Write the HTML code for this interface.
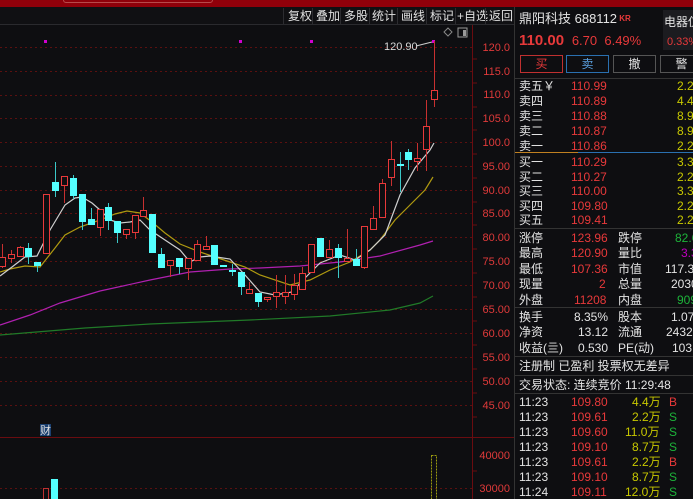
<!DOCTYPE html>
<html><head><meta charset="utf-8"><style>
*{margin:0;padding:0;box-sizing:border-box}
body{width:693px;height:499px;overflow:hidden;background:#0e0e11;font-family:"Liberation Sans","Noto Sans CJK SC",sans-serif;color:#d8d8d8;position:relative}
.abs{position:absolute;white-space:nowrap}
#top{left:0;top:0;width:693px;height:7px;background:#90000a}
#tb{left:0;top:7px;width:514px;height:18px;background:#101013;border-bottom:1px solid #2a2a2e}
#tb span{position:absolute;top:1px;font-size:12px;color:#e0e0e0;line-height:16px}
#tb i{position:absolute;top:1px;width:1px;height:16px;background:#2c2c30}
#rp{left:514px;top:7px;width:179px;height:492px;background:#0e0e11;border-left:1px solid #333}
.r{position:absolute;font-size:12px;line-height:14px;white-space:nowrap}
.red{color:#e8393a}.yel{color:#c8c800}.grn{color:#1db33a}.wht{color:#e4e4e4}.mag{color:#c000c0}
.sep{position:absolute;left:0;width:179px;height:1px;background:#333}
.btn{position:absolute;top:48px;height:18px;width:43px;border:1px solid #555;text-align:center;font-size:12px;line-height:16px}
</style></head><body>
<div id="top" class="abs"><div class="abs" style="left:63px;top:-3px;width:150px;height:6px;border:1px solid #b84a4a;border-radius:4px"></div></div>
<div id="tb" class="abs">
<i style="left:283px"></i><span style="left:288px">复权</span>
<i style="left:312px"></i><span style="left:316px">叠加</span>
<i style="left:340px"></i><span style="left:344px">多股</span>
<i style="left:369px"></i><span style="left:372px">统计</span>
<i style="left:397px"></i><span style="left:401px">画线</span>
<i style="left:426px"></i><span style="left:430px">标记</span>
<i style="left:455px"></i><span style="left:457px">+自选</span>
<i style="left:485px"></i><span style="left:489px">返回</span>
</div>
<svg class="abs" style="left:0;top:25px" width="514" height="474" viewBox="0 25 514 474">
<g stroke="#5a1010" stroke-dasharray="2,3" stroke-width="1">
<line x1="0" x2="472" y1="47.5" y2="47.5"/><line x1="0" x2="472" y1="71.5" y2="71.5"/><line x1="0" x2="472" y1="95.5" y2="95.5"/><line x1="0" x2="472" y1="118.5" y2="118.5"/><line x1="0" x2="472" y1="142.5" y2="142.5"/><line x1="0" x2="472" y1="166.5" y2="166.5"/><line x1="0" x2="472" y1="190.5" y2="190.5"/><line x1="0" x2="472" y1="213.5" y2="213.5"/><line x1="0" x2="472" y1="237.5" y2="237.5"/><line x1="0" x2="472" y1="261.5" y2="261.5"/><line x1="0" x2="472" y1="285.5" y2="285.5"/><line x1="0" x2="472" y1="309.5" y2="309.5"/><line x1="0" x2="472" y1="333.5" y2="333.5"/><line x1="0" x2="472" y1="357.5" y2="357.5"/><line x1="0" x2="472" y1="381.5" y2="381.5"/><line x1="0" x2="472" y1="405.5" y2="405.5"/><line x1="0" x2="472" y1="488.5" y2="488.5"/>
</g>
<line x1="0" x2="514" y1="437.5" y2="437.5" stroke="#6a0c10"/>
<line x1="472.5" x2="472.5" y1="25" y2="499" stroke="#6a0c10"/>
<g stroke="#6a0c10"><line x1="472" x2="477" y1="59" y2="59"/><line x1="472" x2="477" y1="83" y2="83"/><line x1="472" x2="477" y1="107" y2="107"/><line x1="472" x2="477" y1="130" y2="130"/><line x1="472" x2="477" y1="154" y2="154"/><line x1="472" x2="477" y1="178" y2="178"/><line x1="472" x2="477" y1="202" y2="202"/><line x1="472" x2="477" y1="225" y2="225"/><line x1="472" x2="477" y1="249" y2="249"/><line x1="472" x2="477" y1="273" y2="273"/><line x1="472" x2="477" y1="297" y2="297"/><line x1="472" x2="477" y1="321" y2="321"/><line x1="472" x2="477" y1="345" y2="345"/><line x1="472" x2="477" y1="369" y2="369"/><line x1="472" x2="477" y1="393" y2="393"/><line x1="472" x2="477" y1="417" y2="417"/><line x1="472" x2="477" y1="471" y2="471"/></g>
<g fill="#e03a3a" font-size="11" text-anchor="end" font-family="Liberation Sans,sans-serif">
<text x="510" y="51">120.0</text><text x="510" y="75">115.0</text><text x="510" y="98">110.0</text><text x="510" y="122">105.0</text><text x="510" y="146">100.0</text><text x="510" y="170">95.00</text><text x="510" y="194">90.00</text><text x="510" y="217">85.00</text><text x="510" y="241">80.00</text><text x="510" y="265">75.00</text><text x="510" y="289">70.00</text><text x="510" y="313">65.00</text><text x="510" y="337">60.00</text><text x="510" y="361">55.00</text><text x="510" y="385">50.00</text><text x="510" y="409">45.00</text><text x="510" y="459">40000</text><text x="510" y="492">30000</text>
</g>
<g fill="#d000d0"><rect x="44" y="40" width="3" height="3"/><rect x="239" y="40" width="3" height="3"/><rect x="310" y="40" width="3" height="3"/><rect x="432" y="40" width="3" height="3"/></g>
<text x="384" y="50" fill="#d8d8d8" font-size="11">120.90</text>
<line x1="416" y1="46" x2="432" y2="42" stroke="#ccc"/>
<path d="M448 28 l4 4 -4 4 -4 -4z" fill="none" stroke="#888"/>
<rect x="458" y="28" width="9" height="9" fill="none" stroke="#999"/><rect x="463" y="30" width="3" height="6" fill="#999"/>
<polyline fill="none" stroke="#207a28" stroke-width="1.2" points="0,335 85,328 150,324 250,320 330,316 390,310 420,303 433,296"/>
<polyline fill="none" stroke="#b020b0" stroke-width="1.2" points="0,325 30,315 60,303 100,291 150,280 190,272 230,269 260,268 300,266 340,262 380,256 420,245 433,241"/>
<polyline fill="none" stroke="#b09a10" stroke-width="1.2" points="0,272 10,269 25,266 40,267 55,248 65,235 80,227 100,220 115,214 127,211 140,213 152,222 165,233 180,244 200,252 215,257 230,262 245,267 260,275 290,285 310,280 330,270 350,262 370,250 380,240 395,220 410,205 425,190 433,177"/>
<polyline fill="none" stroke="#cfcfcf" stroke-width="1.2" points="0,276 12,267 25,257 37,256 50,230 65,205 75,198 82,197 92,203 100,210 110,220 120,223 130,222 140,220 150,230 165,240 180,250 190,262 200,257 210,256 230,259 245,275 260,292 275,295 292,292 305,278 320,263 340,255 355,260 370,250 385,235 400,195 415,168 430,150 434,143"/>
<g id="c"></g>
<rect x="43.5" y="488.5" width="5" height="11" fill="none" stroke="#c03030"/>
<rect x="51" y="479" width="7" height="20" fill="#54ffff"/>
<rect x="431.5" y="455.5" width="5" height="44" fill="none" stroke="#9a9a10" stroke-dasharray="2,1"/>
<rect x="40" y="424" width="11" height="12" fill="#1a3f70"/><text x="40" y="434" fill="#e0e0e0" font-size="11">财</text>
</svg>
<div id="rp" class="abs">
<div class="r wht" style="left:4px;top:5px;font-size:13px">鼎阳科技 688112<span class="red" style="font-size:8px;font-weight:bold;vertical-align:top"> KR</span></div>
<div class="abs" style="left:148px;top:3px;width:31px;height:40px;background:#1c1c20"></div>
<div class="r wht" style="left:149px;top:8px">电器仪</div>
<div class="r red" style="left:152px;top:28px;font-size:11px">0.33%</div>
<div class="r red" style="left:4px;top:25px;font-size:15px;font-weight:bold;line-height:17px">110.00 <span style="font-weight:normal;font-size:13px">&nbsp;6.70 &nbsp;6.49%</span></div>
<div class="btn red" style="left:5px;border-color:#c03030">买</div>
<div class="btn" style="left:51px;border-color:#2a70b0;color:#5aa0e0">卖</div>
<div class="btn wht" style="left:98px">撤</div>
<div class="btn wht" style="left:145px">警</div>
<div class="sep" style="top:71px"></div>
<div class="r wht" style="left:4px;top:72px">卖五￥</div><div class="r red" style="left:56px;top:72px">110.99</div><div class="r yel" style="left:162px;top:72px">2.2万</div>
<div class="r wht" style="left:4px;top:87px">卖四</div><div class="r red" style="left:56px;top:87px">110.89</div><div class="r yel" style="left:162px;top:87px">4.4万</div>
<div class="r wht" style="left:4px;top:102px">卖三</div><div class="r red" style="left:56px;top:102px">110.88</div><div class="r yel" style="left:162px;top:102px">8.9万</div>
<div class="r wht" style="left:4px;top:117px">卖二</div><div class="r red" style="left:56px;top:117px">110.87</div><div class="r yel" style="left:162px;top:117px">8.9万</div>
<div class="r wht" style="left:4px;top:132px">卖一</div><div class="r red" style="left:56px;top:132px">110.86</div><div class="r yel" style="left:162px;top:132px">2.2万</div>
<div class="abs" style="left:0;top:145px;width:63px;height:1px;background:#c08020"></div><div class="abs" style="left:63px;top:145px;width:116px;height:1px;background:#2a70b0"></div>
<div class="r wht" style="left:4px;top:148px">买一</div><div class="r red" style="left:56px;top:148px">110.29</div><div class="r yel" style="left:162px;top:148px">3.3万</div>
<div class="r wht" style="left:4px;top:163px">买二</div><div class="r red" style="left:56px;top:163px">110.27</div><div class="r yel" style="left:162px;top:163px">2.2万</div>
<div class="r wht" style="left:4px;top:177px">买三</div><div class="r red" style="left:56px;top:177px">110.00</div><div class="r yel" style="left:162px;top:177px">3.3万</div>
<div class="r wht" style="left:4px;top:192px">买四</div><div class="r red" style="left:56px;top:192px">109.80</div><div class="r yel" style="left:162px;top:192px">2.2万</div>
<div class="r wht" style="left:4px;top:206px">买五</div><div class="r red" style="left:56px;top:206px">109.41</div><div class="r yel" style="left:162px;top:206px">2.2万</div>
<div class="sep" style="top:221px"></div>
<div class="r wht" style="left:4px;top:224px">涨停</div><div class="r red" style="left:56px;top:224px">123.96</div><div class="r wht" style="left:103px;top:224px">跌停</div><div class="r grn" style="left:160px;top:224px">82.6</div>
<div class="r wht" style="left:4px;top:239px">最高</div><div class="r red" style="left:56px;top:239px">120.90</div><div class="r wht" style="left:103px;top:239px">量比</div><div class="r mag" style="left:166px;top:239px">3.3</div>
<div class="r wht" style="left:4px;top:255px">最低</div><div class="r red" style="left:56px;top:255px">107.36</div><div class="r wht" style="left:103px;top:255px">市值</div><div class="r wht" style="left:150px;top:255px">117.3</div>
<div class="r wht" style="left:4px;top:270px">现量</div><div class="r red" style="left:84px;top:270px">2</div><div class="r wht" style="left:103px;top:270px">总量</div><div class="r wht" style="left:156px;top:270px">2030</div>
<div class="r wht" style="left:4px;top:286px">外盘</div><div class="r red" style="left:59px;top:286px">11208</div><div class="r wht" style="left:103px;top:286px">内盘</div><div class="r grn" style="left:162px;top:286px">909</div>
<div class="sep" style="top:300px"></div>
<div class="r wht" style="left:4px;top:303px">换手</div><div class="r wht" style="left:59px;top:303px">8.35%</div><div class="r wht" style="left:103px;top:303px">股本</div><div class="r wht" style="left:156px;top:303px">1.07</div>
<div class="r wht" style="left:4px;top:318px">净资</div><div class="r wht" style="left:63px;top:318px">13.12</div><div class="r wht" style="left:103px;top:318px">流通</div><div class="r wht" style="left:151px;top:318px">24327</div>
<div class="r wht" style="left:4px;top:334px">收益(亖)</div><div class="r wht" style="left:63px;top:334px">0.530</div><div class="r wht" style="left:103px;top:334px">PE(动)</div><div class="r wht" style="left:157px;top:334px">103</div>
<div class="sep" style="top:349px"></div>
<div class="r wht" style="left:4px;top:352px">注册制 已盈利 投票权无差异</div>
<div class="sep" style="top:368px"></div>
<div class="r wht" style="left:4px;top:371px">交易状态: 连续竞价 11:29:48</div>
<div class="sep" style="top:386px"></div>
<div class="r wht" style="left:4px;top:388px">11:23</div><div class="r red" style="left:56px;top:388px">109.80</div><div class="r yel" style="left:117px;top:388px">4.4万</div><div class="r red" style="left:154px;top:388px">B</div>
<div class="r wht" style="left:4px;top:403px">11:23</div><div class="r red" style="left:56px;top:403px">109.61</div><div class="r yel" style="left:117px;top:403px">2.2万</div><div class="r grn" style="left:154px;top:403px">S</div>
<div class="r wht" style="left:4px;top:418px">11:23</div><div class="r red" style="left:56px;top:418px">109.60</div><div class="r yel" style="left:110px;top:418px">11.0万</div><div class="r grn" style="left:154px;top:418px">S</div>
<div class="r wht" style="left:4px;top:433px">11:23</div><div class="r red" style="left:56px;top:433px">109.10</div><div class="r yel" style="left:117px;top:433px">8.7万</div><div class="r grn" style="left:154px;top:433px">S</div>
<div class="r wht" style="left:4px;top:448px">11:23</div><div class="r red" style="left:56px;top:448px">109.61</div><div class="r yel" style="left:117px;top:448px">2.2万</div><div class="r red" style="left:154px;top:448px">B</div>
<div class="r wht" style="left:4px;top:463px">11:23</div><div class="r red" style="left:56px;top:463px">109.10</div><div class="r yel" style="left:117px;top:463px">8.7万</div><div class="r grn" style="left:154px;top:463px">S</div>
<div class="r wht" style="left:4px;top:478px">11:24</div><div class="r red" style="left:56px;top:478px">109.11</div><div class="r yel" style="left:110px;top:478px">12.0万</div><div class="r grn" style="left:154px;top:478px">S</div>
</div>
<script>
var d=[[2,257,266,244,268,'r'],[11,254,258,250,263,'r'],[20,247,256,246,256,'r'],[28,248,257,243,264,'c'],[37,262,266,262,272,'c'],[46,194,253,194,253,'r'],[55,182,191,162,197,'c'],[64,176,185,176,203,'r'],[73,178,196,175,199,'c'],[82,194,222,194,230,'c'],[91,219,225,208,225,'c'],[100,209,227,209,236,'r'],[108,207,221,203,230,'c'],[117,221,233,221,243,'c'],[126,229,234,229,239,'r'],[135,215,232,215,239,'r'],[143,210,216,197,216,'r'],[152,214,253,214,253,'c'],[161,254,268,248,268,'c'],[170,260,265,260,277,'r'],[179,258,267,258,274,'c'],[188,258,268,258,280,'r'],[197,244,260,240,260,'r'],[206,246,249,236,249,'r'],[214,245,265,245,265,'c'],[223,265,267,265,267,'c'],[232,270,272,264,276,'c'],[241,272,287,272,295,'c'],[249,289,293,282,293,'r'],[258,293,302,293,307,'c'],[267,297,299,297,302,'r'],[276,292,296,275,308,'r'],[285,292,296,275,304,'r'],[294,285,294,274,300,'r'],[302,273,289,267,289,'r'],[311,244,272,244,272,'r'],[320,238,257,238,257,'c'],[329,249,257,240,257,'r'],[338,248,258,244,278,'c'],[347,258,261,229,262,'r'],[356,259,266,249,266,'c'],[364,226,267,226,269,'r'],[373,218,229,206,229,'r'],[382,183,217,179,218,'r'],[391,159,177,141,186,'r'],[400,164,166,152,192,'c'],[408,152,160,149,170,'c'],[417,158,161,143,171,'r'],[426,126,149,100,171,'r'],[434,90,99,41,107,'r']];
var s='';d.forEach(function(e){var x=e[0],col=e[5]=='r'?'#e8393a':'#54ffff',w=e[5]=='r'?'#c83030':'#3bc8c8';
s+='<line x1="'+(x+.5)+'" x2="'+(x+.5)+'" y1="'+e[3]+'" y2="'+e[4]+'" stroke="'+w+'"/>';
var h=Math.max(e[2]-e[1],1);
if(e[5]=='r')s+='<rect x="'+(x-2.5)+'" y="'+(e[1]+.5)+'" width="6" height="'+h+'" fill="#0e0e11" stroke="'+col+'"/>';
else s+='<rect x="'+(x-3)+'" y="'+e[1]+'" width="7" height="'+h+'" fill="'+col+'"/>';});
document.getElementById('c').innerHTML=s;
</script>
</body></html>
